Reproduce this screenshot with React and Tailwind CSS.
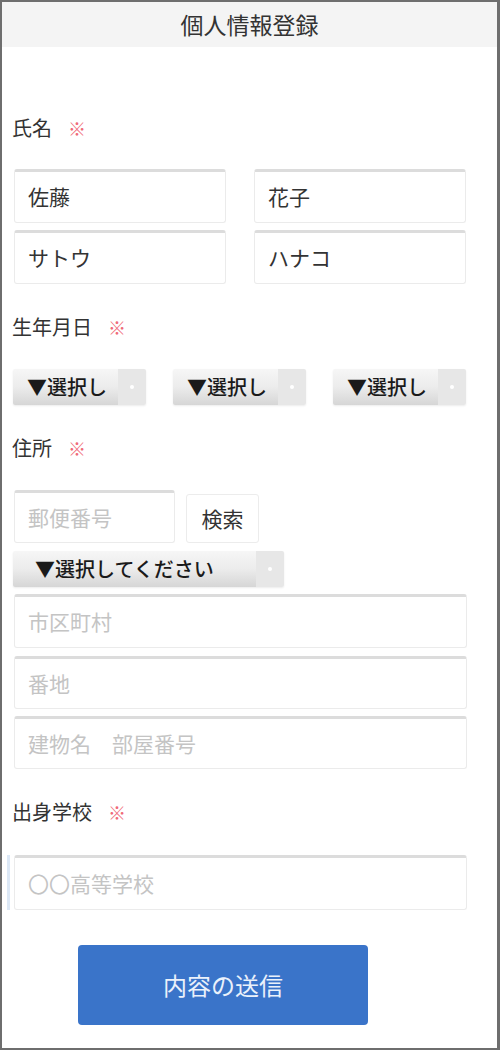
const font = { fontFamily: '"Noto Sans CJK JP", "Noto Sans", sans-serif' };

function Label({ text, className = '' }) {
  return (
    <div className={`h-[24px] pl-[10px] flex items-center text-[20px] leading-[24px] text-[#333] ${className}`}>
      <span>{text}</span>
      <span className="ml-[16px] text-[#f06a78] text-[18px]">※</span>
    </div>
  );
}

function Field({ value, placeholder, className = '' }) {
  return (
    <div
      className={`bg-white rounded-[3px] border border-[#ebebeb] border-t-[3px] border-t-[#dcdcdc] flex items-center pl-[13px] text-[21px] ${
        value ? 'text-[#333]' : 'text-[#c4c4c4]'
      } ${className}`}
    >
      {value || placeholder}
    </div>
  );
}

function Select({ text, className = '', pad = 'pl-[14px]' }) {
  return (
    <div className={`flex h-[36px] rounded-[2px] overflow-hidden shadow-[0_1px_2px_rgba(0,0,0,0.08)] ${className}`}>
      <div className={`flex-1 flex items-center ${pad} whitespace-nowrap text-[20px] font-medium text-[#1a1a1a] bg-gradient-to-b from-[#f6f6f6] via-[#ececec] to-[#d6d6d6]`}>
        {text}
      </div>
      <div className="w-[28px] flex items-center justify-center bg-[#e7e7e7]">
        <span className="w-[4px] h-[4px] bg-white rounded-full" />
      </div>
    </div>
  );
}

export default function App() {
  return (
    <div
      style={font}
      className="w-[500px] h-[1050px] bg-white border-2 border-r-[3px] border-[#6e6e6e] overflow-hidden"
    >
      <div className="h-[45px] bg-[#f4f4f4] flex items-center justify-center text-[23px] text-[#333]">
        個人情報登録
      </div>

      <Label text="氏名" className="mt-[69px]" />
      <div className="mt-[29px] ml-[12px] grid grid-cols-[212px_212px] gap-x-[28px] gap-y-[7px]">
        <Field value="佐藤" className="h-[54px]" />
        <Field value="花子" className="h-[54px]" />
        <Field value="サトウ" className="h-[54px]" />
        <Field value="ハナコ" className="h-[54px]" />
      </div>

      <Label text="生年月日" className="mt-[31px]" />
      <div className="mt-[30px] ml-[11px] w-[453px] flex justify-between">
        <Select text="▼選択し" className="w-[133px]" />
        <Select text="▼選択し" className="w-[133px]" />
        <Select text="▼選択し" className="w-[133px]" />
      </div>

      <Label text="住所" className="mt-[31px]" />
      <div className="mt-[30px] ml-[12px] flex items-end gap-[11px]">
        <Field placeholder="郵便番号" className="w-[161px] h-[53px]" />
        <div className="w-[73px] h-[49px] border border-[#ececec] rounded-[3px] flex items-center justify-center text-[21px] text-[#333]">
          検索
        </div>
      </div>
      <Select text="▼選択してください" pad="pl-[22px]" className="mt-[8px] ml-[11px] w-[271px]" />
      <Field placeholder="市区町村" className="mt-[7px] ml-[12px] w-[453px] h-[54px]" />
      <Field placeholder="番地" className="mt-[8px] ml-[12px] w-[453px] h-[53px]" />
      <Field placeholder="建物名　部屋番号" className="mt-[7px] ml-[12px] w-[453px] h-[53px]" />

      <Label text="出身学校" className="mt-[31px]" />
      <div className="mt-[31px] ml-[5px] flex">
        <div className="w-[3px] h-[55px] bg-[#dce8f6]" />
        <Field placeholder="〇〇高等学校" className="ml-[4px] w-[453px] h-[55px]" />
      </div>

      <div className="mt-[35px] ml-[76px] w-[290px] h-[80px] rounded-[4px] bg-[#3a74c9] flex items-center justify-center text-[24px] text-[#eaf1fb]">
        内容の送信
      </div>
    </div>
  );
}
